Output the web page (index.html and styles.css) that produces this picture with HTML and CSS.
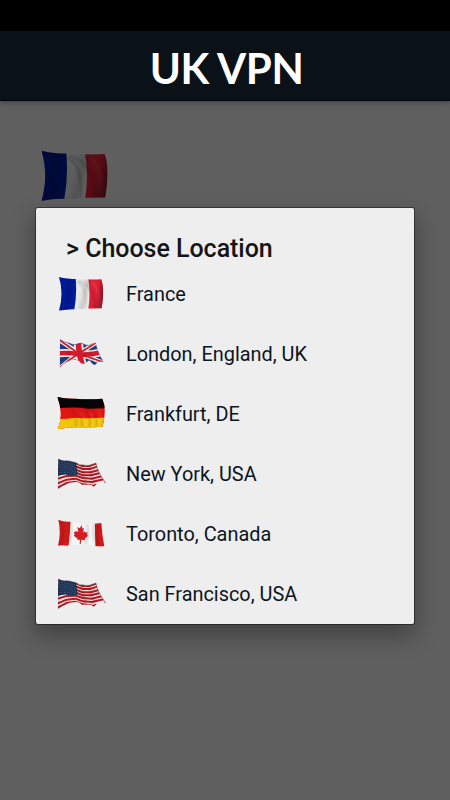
FILE: index.html
```html
<!DOCTYPE html>
<html lang="en">
<head>
<meta charset="utf-8">
<title>UK VPN</title>
<link rel="stylesheet" href="styles.css">
</head>
<body>
<svg class="defs" aria-hidden="true">
  <defs>
    <linearGradient id="folds" x1="0" y1="0" x2="1" y2="0.18">
      <stop offset="0" stop-opacity=".15"/><stop offset=".13" stop-opacity="0"/>
      <stop offset=".31" stop-opacity=".08"/><stop offset=".43" stop-opacity="0"/>
      <stop offset=".54" stop-opacity=".03"/><stop offset=".65" stop-opacity=".14"/>
      <stop offset=".76" stop-opacity="0"/><stop offset=".88" stop-opacity=".04"/>
      <stop offset="1" stop-opacity=".3"/>
    </linearGradient>
    <filter id="soft" x="-20%" y="-20%" width="140%" height="140%"><feGaussianBlur stdDeviation="2.4"/></filter>
    <clipPath id="fr-shape"><path d="M27 21Q50 27 83 27Q125 30 154 28Q165 58 155 115Q120 115 84 118Q55 116 27 122Q42 70 27 21Z"/></clipPath>
    <clipPath id="uk-shape"><path d="M30 28Q42 38 57 39Q70 46 80 43Q93 35 105 44Q117 50 127 41L137 38Q144 70 160 94Q148 95 142 93Q140 104 132 104Q126 101 119 91Q109 95 105 100Q93 104 88 93Q72 84 58 92Q39 99 29 113Z"/></clipPath>
    <clipPath id="de-shape"><path d="M22 21Q45 27 75 26Q115 30 157 26Q171 57 158 110Q125 113 90 112Q55 111 23 118Q42 71 22 21Z"/></clipPath>
    <clipPath id="us-shape"><path d="M25 27Q37 35 50 32Q67 34 80 39Q88 47 97 44Q108 48 118 46L138 39Q142 65 167 99Q158 91 148 97Q142 98 132 111Q123 102 110 104Q101 102 96 105Q88 94 75 97Q61 96 50 102Q34 108 23 117Z"/></clipPath>
    <clipPath id="ca-shape"><path d="M25 29Q41 37 62 35Q84 38 101 44Q124 42 154 39Q156 74 163 109Q141 110 127 107Q105 100 88 105Q63 103 51 107Q38 105 24 107Q34 69 25 29Z"/></clipPath>

    <symbol id="flag-fr" viewBox="0 0 195 150">
      <g clip-path="url(#fr-shape)">
        <path fill="#eee" d="M15 10h160v125H15z"/>
        <path fill="#001b9a" d="M15 10h60Q84 68 70 135H15z"/>
        <path fill="#e51e35" d="M112 10h65v125h-65Q125 70 112 10z"/>
        <g filter="url(#soft)" fill="none" stroke="#000" stroke-width="5" stroke-opacity=".16">
          <path d="M48 26Q65 48 49 118M79 36Q111 47 105 112M83 31Q137 48 133 116M157 25Q165 55 154 116"/>
          <path stroke="#fff" stroke-opacity=".14" d="M76 42Q101 65 97 115M124 36Q150 50 146 112"/>
        </g>
        <path fill="url(#folds)" d="M25 20h138v103H25z"/>
      </g>
    </symbol>

    <symbol id="flag-uk" viewBox="0 0 195 150">
      <g clip-path="url(#uk-shape)">
        <path fill="#203b84" d="M20 20h150v100H20z"/>
        <g fill="none" stroke="#f3eeee">
          <path stroke-width="13" d="M26 29L88 70L161 99M29 115Q57 90 88 70L142 35"/>
          <path stroke-width="29" d="M85 34Q86 68 97 108"/>
          <path stroke-width="24" d="M24 70Q55 67 88 73Q122 76 156 66"/>
        </g>
        <g fill="none" stroke="#d7192e">
          <path stroke-width="5" d="M27 29L88 72L161 97M29 113Q57 89 88 70L140 37"/>
          <path stroke-width="17" d="M85 34Q86 68 97 108"/>
          <path stroke-width="14" d="M24 70Q55 67 88 73Q122 76 156 66"/>
        </g>
        <g filter="url(#soft)" fill="none" stroke="#000" stroke-opacity=".22" stroke-width="5">
          <path d="M56 42Q60 62 50 92M105 42Q99 65 111 98M122 44Q119 74 132 101"/>
        </g>
      </g>
      <path fill="none" stroke="#303659" stroke-width="1.6" stroke-opacity=".7" d="M31 28Q42 38 57 39Q70 46 80 43Q93 35 105 44Q117 50 127 41M119 91Q126 101 132 104Q140 104 142 93L160 94"/>
    </symbol>

    <symbol id="flag-de" viewBox="0 0 195 150">
      <g clip-path="url(#de-shape)">
        <path fill="#e31414" d="M15 10h160v120H15z"/>
        <path fill="#050505" d="M15 10h160v45Q142 55 115 56Q80 50 15 55z"/>
        <path fill="#f2c70a" d="M15 87Q49 88 76 83Q120 87 175 82v48H15z"/>
        <g filter="url(#soft)" fill="none" stroke="#4c1800" stroke-opacity=".3" stroke-width="4">
          <path d="M63 56Q81 68 78 112M78 53Q99 76 96 112M93 52Q126 67 118 112M111 54Q145 68 139 111M163 42Q166 78 155 110"/>
          <path stroke="#fff" stroke-opacity=".1" d="M83 66Q112 78 107 112M121 68Q133 89 128 111M148 58Q154 83 147 109"/>
        </g>
      </g>
    </symbol>

    <symbol id="flag-us" viewBox="0 0 195 150">
      <g clip-path="url(#us-shape)">
        <path fill="#eee8e5" d="M15 20h160v100H15z"/>
        <g fill="none" stroke="#b71722" stroke-width="6" stroke-linejoin="round">
          <path d="M25 31L50 35L80 41L97 48L118 48L139 41"/>
          <path d="M25 44L50 45L79 50L98 57L120 57L144 49"/>
          <path d="M24 59L50 57L78 59L98 67L122 67L149 59"/>
          <path d="M24 72L50 67L78 68L99 76L123 76L153 68"/>
          <path d="M24 86L50 78L77 77L99 84L125 86L158 78"/>
          <path d="M23 100L50 89L76 86L99 94L126 96L163 87"/>
          <path d="M23 113L50 99L75 95L100 103L130 107L168 97"/>
        </g>
        <path fill="#1d3456" d="M20 20L50 30L78 37L83 74Q67 79 51 74Q36 73 20 79Z"/>
        <g fill="none" stroke="#8294ad" stroke-width="2.1" stroke-dasharray="2.3 5.2">
          <path d="M28 37Q49 38 78 46M31 44Q51 45 80 53M28 51Q50 51 81 60M31 59Q51 58 82 67M28 67Q50 65 82 73"/>
        </g>
        <g filter="url(#soft)" fill="none" stroke="#000" stroke-opacity=".28" stroke-width="4">
          <path d="M76 37Q89 65 88 100M97 43Q97 67 107 104M118 46Q117 65 135 102M25 29L24 117"/>
        </g>
      </g>
      <path fill="none" stroke="#37343a" stroke-opacity=".7" stroke-width="1.8" d="M25 27Q37 35 50 32Q67 34 80 39Q88 47 97 44Q108 48 118 46L138 39Q142 65 167 99M24 116Q34 108 50 102"/>
    </symbol>

    <symbol id="flag-ca" viewBox="0 0 195 150">
      <g clip-path="url(#ca-shape)">
        <path fill="#f6f6f6" d="M15 20h160v100H15z"/>
        <path fill="#cf1a1a" d="M15 20h47Q61 70 54 120H15zM135 20h40v100h-38Q134 65 135 20z"/>
        <g filter="url(#soft)" fill="none" stroke="#000" stroke-opacity=".15" stroke-width="7">
          <path d="M36 31Q45 68 31 108M62 34Q67 70 56 107M111 42Q118 75 105 105M134 38Q126 74 141 108"/>
          <path stroke="#500" stroke-opacity=".35" stroke-width="4" d="M148 43Q137 74 146 108"/>
        </g>
      </g>
      <path fill="#d51c20" d="M96 45L89 55L82 51L85 66L77 62L76 67L71 66L74 74L71 77L83 86L82 90L90 89L89 102H92L94 89L106 91L104 86L114 77L111 74L113 67L107 68L105 63L99 68L102 53L97 56Z"/>
    </symbol>
  </defs>
</svg>

<div class="screen">
  <div class="status-bar"></div>
  <header class="app-bar"><h1>UK VPN</h1></header>
  <main class="content">
    <svg class="current-flag"><use href="#flag-fr"/></svg>
    <section class="dialog" role="dialog" aria-labelledby="dialog-title">
      <h2 id="dialog-title">&gt; Choose Location</h2>
      <ul class="locations">
        <li><svg class="flag"><use href="#flag-fr"/></svg><span>France</span></li>
        <li><svg class="flag"><use href="#flag-uk"/></svg><span>London, England, UK</span></li>
        <li><svg class="flag"><use href="#flag-de"/></svg><span>Frankfurt, DE</span></li>
        <li><svg class="flag"><use href="#flag-us"/></svg><span>New York, USA</span></li>
        <li><svg class="flag"><use href="#flag-ca"/></svg><span>Toronto, Canada</span></li>
        <li><svg class="flag"><use href="#flag-us"/></svg><span>San Francisco, USA</span></li>
      </ul>
    </section>
  </main>
</div>
</body>
</html>
```

FILE: styles.css
```css
* { box-sizing: border-box; }

body {
  margin: 0;
  background: #5f5f5f;
  font-family: Roboto, "Liberation Sans", sans-serif;
}

.defs {
  position: absolute;
  width: 0;
  height: 0;
}

.screen {
  display: flex;
  flex-direction: column;
  width: 450px;
  height: 800px;
  overflow: hidden;
}

.status-bar {
  flex: 0 0 31px;
  background: #000;
}

.app-bar {
  display: flex;
  flex: 0 0 70px;
  align-items: center;
  justify-content: center;
  padding: 4px 0 0 3px;
  background: #0a1117;
  border-bottom: 1px solid #030314;
  box-shadow: 0 1px 5px rgba(0, 0, 0, .4);
}

.app-bar h1 {
  margin: 0;
  color: #fff;
  font: 700 42px/50px Lato, sans-serif;
  letter-spacing: -.4px;
  white-space: nowrap;
}

.content {
  display: flex;
  flex: 1;
  flex-direction: column;
  align-items: flex-start;
  padding: 39px 36px 0;
}

.current-flag {
  flex: none;
  width: 97px;
  height: 75px;
  margin-left: -8px;
  filter: brightness(.4);
}

.dialog {
  width: 378px;
  height: 416px;
  margin-top: -7px;
  padding-top: 23px;
  overflow: hidden;
  border-radius: 2px;
  background: #eee;
  box-shadow: 0 0 0 1px rgba(0, 0, 0, .4), 0 10px 22px 2px rgba(0, 0, 0, .3);
  z-index: 1;
}

.dialog h2 {
  margin: 0 0 0 30px;
  color: #151515;
  font-size: 25px;
  font-weight: 500;
  line-height: 35px;
  letter-spacing: -.03px;
}

.locations {
  margin: -1px 0 0;
  padding: 0;
  list-style: none;
}

.locations li {
  display: flex;
  align-items: center;
  gap: 11px;
  height: 60px;
  padding-left: 14px;
  color: #0b151f;
  font-size: 19.9px;
}

.locations span {
  padding-bottom: 1px;
}

.flag {
  flex: none;
  width: 65px;
  height: 50px;
}
```
